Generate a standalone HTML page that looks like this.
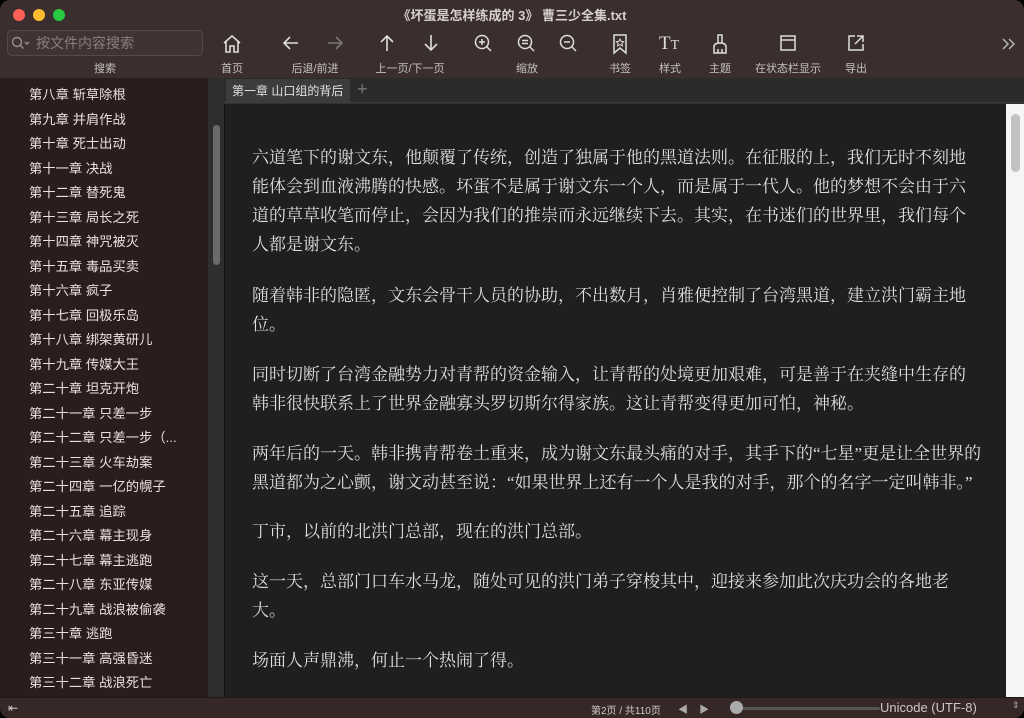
<!DOCTYPE html>
<html><head><meta charset="utf-8"><style>
*{margin:0;padding:0;box-sizing:border-box}
body{width:1024px;height:718px;overflow:hidden;background:#000;font-family:"Liberation Sans","Noto Sans CJK SC",sans-serif}
.win{position:absolute;left:0;top:0;width:1024px;height:718px;background:#3a2f2e;border-radius:10px;overflow:hidden}
.title{position:absolute;top:5px;left:0;width:1024px;text-align:center;color:#d8d0cf;font-size:13px;font-weight:bold}
.tl{position:absolute;top:9px;width:12px;height:12px;border-radius:50%}
.search{position:absolute;left:7px;top:30px;width:196px;height:26px;border:1px solid #55494a;border-radius:5px;background:#3f3433;color:#8a7f7e;font-size:14px;line-height:24px;padding-left:28px}
.lbl{position:absolute;top:60px;color:#c8c0bf;font-size:11px;transform:translateX(-50%);white-space:nowrap}
.ic{position:absolute;top:33px;transform:translateX(-50%)}
.side{position:absolute;left:0;top:78px;width:208px;height:619px;background:#2b1d1c}
.side div{position:absolute;left:29px;color:#e8e0df;font-size:13.3px;white-space:nowrap}
.sgut{position:absolute;left:208px;top:78px;width:16px;height:619px;background:#2e2e2e}
.tabs{position:absolute;left:224px;top:78px;width:800px;height:25px;background:#2b2b2b;border-bottom:1px solid #3a3a3a}
.tab{position:absolute;left:2px;top:1px;width:124px;height:24px;background:#3c3c3c;color:#e0e0e0;font-size:12px;line-height:24px;padding-left:6px}
.txt{position:absolute;left:224px;top:104px;width:782px;height:593px;background:#1f1f1f;border-left:1px solid #111}
.txt p{position:absolute;left:27px;color:#dedede;font-family:"Liberation Serif","Noto Serif CJK SC",serif;font-size:17px;line-height:29px;white-space:nowrap}
.rs{position:absolute;left:1006px;top:104px;width:18px;height:593px;background:#f5f5f5}
.status{position:absolute;left:0;top:697px;width:1024px;height:21px;background:#362827;border-top:1px solid #201818;color:#d0c8c7;font-size:12px}
</style></head><body><div class="win">
<div class="tl" style="left:13px;background:#fe5f57"></div>
<div class="tl" style="left:33px;background:#febc2e"></div>
<div class="tl" style="left:53px;background:#28c840"></div>
<div class="title">《坏蛋是怎样练成的 3》 曹三少全集.txt</div>
<div class="search">按文件内容搜索</div>
<svg style="position:absolute;left:11px;top:36px" width="20" height="14" stroke="#9a8f8e" fill="none" stroke-width="1.4"><circle cx="6" cy="6" r="4.5"/><path d="M9.5 9.5L12.5 12.5M14 6l2 2 2-2"/></svg>
<div class="lbl" style="left:105px">搜索</div>
<svg class="ic" style="left:232px" width="22" height="22" stroke="#ddd" fill="none" stroke-width="1.6"><path d="M3 10L11 3l8 7M5 8v11h4v-6h4v6h4V8"/></svg>
<div class="lbl" style="left:232px">首页</div>
<svg class="ic" style="left:291px" width="20" height="20" stroke="#ddd" fill="none" stroke-width="1.6"><path d="M17 10H3M9 4l-6 6 6 6"/></svg>
<svg class="ic" style="left:335px" width="20" height="20" stroke="#777" fill="none" stroke-width="1.6"><path d="M3 10h14M11 4l6 6-6 6"/></svg>
<div class="lbl" style="left:315px">后退/前进</div>
<svg class="ic" style="left:387px" width="20" height="20" stroke="#ddd" fill="none" stroke-width="1.6"><path d="M10 18V3M4 9l6-6 6 6"/></svg>
<svg class="ic" style="left:431px" width="20" height="20" stroke="#ddd" fill="none" stroke-width="1.6"><path d="M10 2v15M4 11l6 6 6-6"/></svg>
<div class="lbl" style="left:410px">上一页/下一页</div>
<svg class="ic" style="left:483px" width="20" height="20" stroke="#ddd" fill="none" stroke-width="1.5"><circle cx="9" cy="9" r="6.5"/><path d="M14 14l4 4M9 6v6M6 9h6"/></svg>
<svg class="ic" style="left:526px" width="20" height="20" stroke="#ddd" fill="none" stroke-width="1.5"><circle cx="9" cy="9" r="6.5"/><path d="M14 14l4 4M6 7.5h6M6 10.5h6"/></svg>
<svg class="ic" style="left:568px" width="20" height="20" stroke="#ddd" fill="none" stroke-width="1.5"><circle cx="9" cy="9" r="6.5"/><path d="M14 14l4 4M6 9h6"/></svg>
<div class="lbl" style="left:527px">缩放</div>
<svg class="ic" style="left:620px" width="20" height="22" stroke="#ddd" fill="none" stroke-width="1.5"><path d="M4 2h12v18l-6-5-6 5z"/><path d="M10 6l1.2 2.4 2.5.3-1.8 1.7.5 2.5-2.4-1.3-2.4 1.3.5-2.5-1.8-1.7 2.5-.3z" stroke-width="1"/></svg>
<div class="lbl" style="left:620px">书签</div>
<div style="position:absolute;left:659px;top:33px;color:#ddd;font-family:'Liberation Serif',serif;font-size:19px">T<span style="font-size:14px">T</span></div>
<div class="lbl" style="left:670px">样式</div>
<svg class="ic" style="left:720px" width="20" height="22" stroke="#ddd" fill="none" stroke-width="1.5"><path d="M8 2h4v8H8zM4 20v-6q0-4 6-4t6 4v6zM8 16v4M12 16v4"/></svg>
<div class="lbl" style="left:720px">主题</div>
<svg class="ic" style="left:788px" width="20" height="20" stroke="#ddd" fill="none" stroke-width="1.5"><rect x="3" y="3" width="14" height="14"/><path d="M3 7h14"/></svg>
<div class="lbl" style="left:788px">在状态栏显示</div>
<svg class="ic" style="left:856px" width="20" height="20" stroke="#ddd" fill="none" stroke-width="1.5"><path d="M9 3H3v14h14v-6M11 3h6v6M17 3l-8 8"/></svg>
<div class="lbl" style="left:856px">导出</div>
<svg style="position:absolute;left:1001px;top:37px" width="16" height="14" stroke="#bbb" fill="none" stroke-width="1.4"><path d="M2 2l5 5-5 5M8 2l5 5-5 5"/></svg>
<div class="side">
<div style="top:6px">第八章 斩草除根</div><div style="top:30.5px">第九章 并肩作战</div><div style="top:55px">第十章 死士出动</div><div style="top:79.5px">第十一章 决战</div><div style="top:104px">第十二章 替死鬼</div><div style="top:128.5px">第十三章 局长之死</div><div style="top:153px">第十四章 神咒被灭</div><div style="top:177.5px">第十五章 毒品买卖</div><div style="top:202px">第十六章 疯子</div><div style="top:226.5px">第十七章 回极乐岛</div><div style="top:251px">第十八章 绑架黄研儿</div><div style="top:275.5px">第十九章 传媒大王</div><div style="top:300px">第二十章 坦克开炮</div><div style="top:324.5px">第二十一章 只差一步</div><div style="top:349px">第二十二章 只差一步（...</div><div style="top:373.5px">第二十三章 火车劫案</div><div style="top:398px">第二十四章 一亿的幌子</div><div style="top:422.5px">第二十五章 追踪</div><div style="top:447px">第二十六章 幕主现身</div><div style="top:471.5px">第二十七章 幕主逃跑</div><div style="top:496px">第二十八章 东亚传媒</div><div style="top:520.5px">第二十九章 战浪被偷袭</div><div style="top:545px">第三十章 逃跑</div><div style="top:569.5px">第三十一章 高强昏迷</div><div style="top:594px">第三十二章 战浪死亡</div>
</div>
<div class="sgut"><div style="position:absolute;left:5px;top:47px;width:7px;height:140px;border-radius:4px;background:#6a6a6a"></div></div>
<div class="tabs"><div class="tab">第一章 山口组的背后</div><div style="position:absolute;left:133px;top:1px;color:#777;font-size:18px">+</div></div>
<div class="txt">
<p style="top:39px">六道笔下的谢文东，他颠覆了传统，创造了独属于他的黑道法则。在征服的上，我们无时不刻地</p>
<p style="top:68px">能体会到血液沸腾的快感。坏蛋不是属于谢文东一个人，而是属于一代人。他的梦想不会由于六</p>
<p style="top:97px">道的草草收笔而停止，会因为我们的推崇而永远继续下去。其实，在书迷们的世界里，我们每个</p>
<p style="top:126px">人都是谢文东。</p>
<p style="top:177px">随着韩非的隐匿，文东会骨干人员的协助，不出数月，肖雅便控制了台湾黑道，建立洪门霸主地</p>
<p style="top:206px">位。</p>
<p style="top:256px">同时切断了台湾金融势力对青帮的资金输入，让青帮的处境更加艰难，可是善于在夹缝中生存的</p>
<p style="top:285px">韩非很快联系上了世界金融寡头罗切斯尔得家族。这让青帮变得更加可怕，神秘。</p>
<p style="top:335px">两年后的一天。韩非携青帮卷土重来，成为谢文东最头痛的对手，其手下的“七星”更是让全世界的</p>
<p style="top:364px">黑道都为之心颤，谢文动甚至说：“如果世界上还有一个人是我的对手，那个的名字一定叫韩非。”</p>
<p style="top:413px">丁市，以前的北洪门总部，现在的洪门总部。</p>
<p style="top:463px">这一天，总部门口车水马龙，随处可见的洪门弟子穿梭其中，迎接来参加此次庆功会的各地老</p>
<p style="top:492px">大。</p>
<p style="top:542px">场面人声鼎沸，何止一个热闹了得。</p>
</div>
<div class="rs"><div style="position:absolute;left:5px;top:10px;width:9px;height:58px;border-radius:5px;background:#c2c2c2"></div></div>
<div class="status">
<div style="position:absolute;left:8px;top:3px;font-size:12px">⇤</div>
<div style="position:absolute;left:591px;top:4px;font-size:10px">第2页 / 共110页</div>
<div style="position:absolute;left:678px;top:3px;font-size:10px;color:#aaa">◀&nbsp;&nbsp;&nbsp;&nbsp;▶</div>
<div style="position:absolute;left:738px;top:9px;width:142px;height:3px;background:#555;border-radius:2px"></div>
<div style="position:absolute;left:730px;top:3px;width:13px;height:13px;border-radius:50%;background:#aaa"></div>
<div style="position:absolute;left:880px;top:2px;font-size:13px">Unicode (UTF-8)</div>
<div style="position:absolute;left:1012px;top:2px;font-size:9px;color:#aaa">⇕</div>
</div>
</div></body></html>
